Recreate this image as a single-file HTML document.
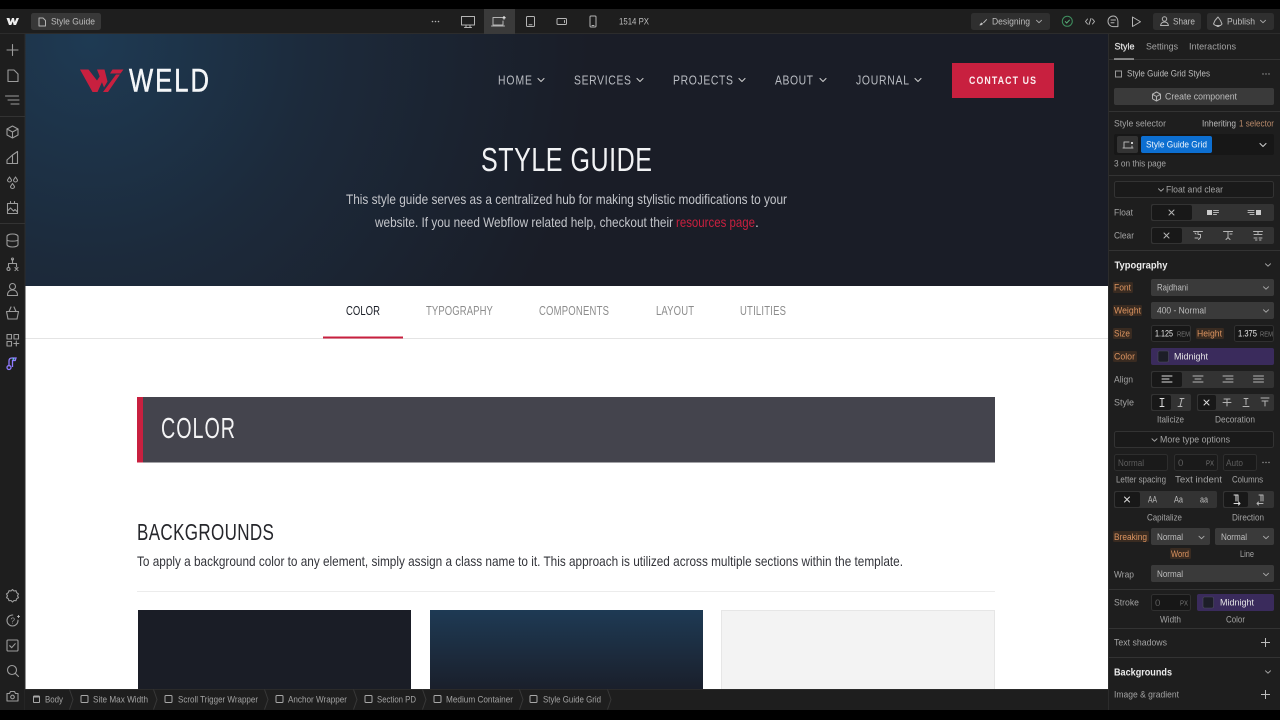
<!DOCTYPE html>
<html><head><meta charset="utf-8"><title>Style Guide</title>
<style>
html,body{margin:0;padding:0;background:#000;width:1280px;height:720px;overflow:hidden}
svg{display:block;filter:blur(.3px)}
text{font-family:"Liberation Sans",sans-serif;white-space:pre}
.u{font-size:9.6px;fill:#bdbdbd;transform:translateY(-.5px)}
.g{font-size:9.6px;fill:#a3a3a3;transform:translateY(-.5px)}
.o{font-size:9.6px;fill:#dc9460;transform:translateY(-.5px)}
.w{font-size:9.6px;fill:#e6e6e6;transform:translateY(-.5px)}
.i{fill:none;stroke:#b4b4b4;stroke-width:1;stroke-linecap:round;stroke-linejoin:round}
.r{fill:none;stroke:#9c9c9c;stroke-width:1.1;stroke-linecap:round;stroke-linejoin:round}
</style></head><body>
<svg width="1280" height="720" viewBox="0 0 1280 720" xmlns="http://www.w3.org/2000/svg">
<defs>
<radialGradient id="hero" gradientUnits="userSpaceOnUse" cx="90" cy="40" r="500">
<stop offset="0" stop-color="#1e3a53"/><stop offset=".45" stop-color="#1c2a3b"/><stop offset="1" stop-color="#1a1d27"/>
</radialGradient>
<linearGradient id="card" x1="0" y1="0" x2="0" y2="1"><stop offset="0" stop-color="#1e3a54"/><stop offset="1" stop-color="#1a1f2b"/></linearGradient>
<path id="chev" d="M-3-1.5 0 1.5 3-1.5" fill="none" stroke="#c8c8c8" stroke-width="1.1" stroke-linecap="round" stroke-linejoin="round"/>
<path id="pchev" d="M-2.5-1.2 0 1.2 2.5-1.2" fill="none" stroke="#a8a8a8" stroke-width="1" stroke-linecap="round" stroke-linejoin="round"/>
<path id="sep" d="M-1.5-10 2 0-1.5 10" fill="none" stroke="#383838" stroke-width="1"/>
<rect id="box" x="-3.5" y="-3.5" width="7" height="7" rx="1" fill="none" stroke="#a8a8a8" stroke-width="1"/>
<path id="plus" d="M-4.500 0H4.500M0-4.500V4.500" stroke="#bdbdbd" stroke-width="1" fill="none"/>
</defs>

<rect width="1280" height="720" fill="#000"/>
<!-- canvas -->
<rect x="25" y="34" width="1083" height="655" fill="#fff"/>
<rect x="25" y="34" width="1083" height="252" fill="url(#hero)"/>

<!-- logo -->
<polygon points="80,69.5 88.5,69.5 97,80.5 101,74.5 105.5,74.5 97.5,92 92.5,92" fill="#c8203f"/>
<polygon points="97,69.5 104.5,69.5 107.5,81.5 104,87.5" fill="#c8203f"/>
<polygon points="103,92 116,74.5 120,74.5 108,92" fill="#c8203f"/>
<polygon points="112.5,69.5 123.5,69.5 120.5,73.5 110,73.5" fill="#c8203f"/>
<text transform="translate(129 91.5) scale(.8 1)" font-size="32" fill="#f4f6f8" textLength="100" lengthAdjust="spacing" stroke="#f4f6f8" stroke-width=".5">WELD</text>

<!-- nav -->
<g font-size="13" fill="#b9bcc2">
<text transform="translate(498 84.5) scale(.8 1)" textLength="42.500" lengthAdjust="spacing">HOME</text>
<text transform="translate(574 84.5) scale(.8 1)" textLength="71.250" lengthAdjust="spacing">SERVICES</text>
<text transform="translate(673 84.5) scale(.8 1)" textLength="75" lengthAdjust="spacing">PROJECTS</text>
<text transform="translate(775 84.5) scale(.8 1)" textLength="47.500" lengthAdjust="spacing">ABOUT</text>
<text transform="translate(856 84.5) scale(.8 1)" textLength="66.250" lengthAdjust="spacing">JOURNAL</text>
</g>
<use href="#chev" x="541" y="80"/><use href="#chev" x="640" y="80"/><use href="#chev" x="742" y="80"/><use href="#chev" x="823" y="80"/><use href="#chev" x="918" y="80"/>
<rect x="952" y="63" width="102" height="35" fill="#c8203f"/>
<text transform="translate(969 84) scale(.8 1)" font-size="11" font-weight="bold" fill="#fbeef0" textLength="83.750" lengthAdjust="spacing">CONTACT US</text>

<!-- hero -->
<text transform="translate(481 171) scale(.76 1)" font-size="33" fill="#f2f3f5" textLength="225" lengthAdjust="spacing">STYLE GUIDE</text>
<text x="346" y="204" font-size="14" fill="#c3c5ca" textLength="441" lengthAdjust="spacingAndGlyphs">This style guide serves as a centralized hub for making stylistic modifications to your</text>
<text x="375" y="227" font-size="14" fill="#c3c5ca" textLength="298" lengthAdjust="spacingAndGlyphs">website. If you need Webflow related help, checkout their</text>
<text x="676" y="227" font-size="14" fill="#c8203f" textLength="79" lengthAdjust="spacingAndGlyphs">resources page</text>
<text x="755" y="227" font-size="14" fill="#c3c5ca">.</text>

<!-- tabs -->
<rect x="25" y="338" width="1083" height="1" fill="#e4e4e4"/>
<rect x="323" y="336.500" width="80" height="2" fill="#c8203f"/>
<g font-size="12.500" fill="#8c8c8c">
<text transform="translate(346 315) scale(.76 1)" fill="#1a1d26" textLength="44.700" lengthAdjust="spacing">COLOR</text>
<text transform="translate(426 315) scale(.76 1)" textLength="88" lengthAdjust="spacing">TYPOGRAPHY</text>
<text transform="translate(539 315) scale(.76 1)" textLength="92" lengthAdjust="spacing">COMPONENTS</text>
<text transform="translate(656 315) scale(.76 1)" textLength="50" lengthAdjust="spacing">LAYOUT</text>
<text transform="translate(740 315) scale(.76 1)" textLength="60.500" lengthAdjust="spacing">UTILITIES</text>
</g>

<!-- band -->
<rect x="137" y="397" width="858" height="65.500" fill="#44444d"/>
<rect x="137" y="397" width="6" height="65.500" fill="#c8203f"/>
<text transform="translate(161 438) scale(.68 1)" font-size="29" fill="#f4f4f5" textLength="108.800" lengthAdjust="spacing">COLOR</text>
<text transform="translate(137 540) scale(.74 1)" font-size="23" fill="#25262b" textLength="185" lengthAdjust="spacing">BACKGROUNDS</text>
<text x="137" y="566" font-size="14" fill="#33343a" textLength="766" lengthAdjust="spacingAndGlyphs">To apply a background color to any element, simply assign a class name to it. This approach is utilized across multiple sections within the template.</text>
<rect x="137" y="591" width="858" height="1" fill="#ececec"/>
<rect x="138" y="610" width="273" height="79" fill="#1a1d26"/>
<rect x="430" y="610" width="273" height="79" fill="url(#card)"/>
<rect x="721.500" y="610.500" width="273" height="79" fill="#f3f3f3" stroke="#e6e6e6"/>

<!-- top bar -->
<rect x="0" y="9" width="1280" height="25" fill="#1e1e1e"/>
<rect x="0" y="33" width="1280" height="1" fill="#2c2c2c"/>
<path d="M6.500 18h3l1 4 1.500-4h2l.8 4 1.700-4H19l-3 7h-2.400l-.8-3.500-1.500 3.500H9z" fill="#eee"/>
<rect x="31" y="13" width="70" height="17" rx="2.500" fill="#383838"/>
<path class="i" d="M39 18h4l2.500 2.500V26H39z"/>
<text x="51" y="25" class="u" textLength="44" lengthAdjust="spacingAndGlyphs">Style Guide</text>
<g fill="#b4b4b4"><circle cx="432.500" cy="21.500" r=".8"/><circle cx="435.500" cy="21.500" r=".8"/><circle cx="438.500" cy="21.500" r=".8"/></g>
<rect x="484" y="9" width="31" height="25" fill="#3a3a3a"/>
<path class="i" d="M461.500 16.500h13v8.500h-13zM464.500 27.500h7M466 25v2.500M470 25v2.500"/>
<path class="i" d="M493 17.500h9M493 17.500v7.500h10v-4M491.500 26h13"/>
<path d="M504 16v3.500M502.300 17.750h3.400" stroke="#eee" stroke-width="1.100"/>
<rect x="526.500" y="16.500" width="8" height="10" rx="1" class="i"/><path class="i" d="M529 24.800h3"/>
<rect x="557" y="18.500" width="9.500" height="6" rx="1" class="i"/><path class="i" d="M564.500 20.500v2"/>
<rect x="590" y="16" width="6" height="11" rx="1" class="i"/><path class="i" d="M592 25.500h2"/>
<text x="619" y="25" class="u" textLength="30" lengthAdjust="spacingAndGlyphs">1514 PX</text>

<rect x="971" y="13" width="79" height="17" rx="2.500" fill="#2f2f2f"/>
<path d="M979.500 25.500l2.500-.5 1-1.500-1.500-1-1.500 1.500zM983 22.500l3.500-3.500.6.600-3.300 3.600z" fill="#bdbdbd"/>
<text x="992" y="25" class="u" textLength="38" lengthAdjust="spacingAndGlyphs">Designing</text>
<use href="#pchev" x="1039" y="21.500"/>
<circle cx="1067.300" cy="21.300" r="5" fill="none" stroke="#3f8f5f" stroke-width="1"/>
<path d="M1065 21.300l1.700 1.700 3-3.200" fill="none" stroke="#5cb27c" stroke-width="1"/>
<path class="i" d="M1087.500 19l-2 2.500 2 2.500M1092.500 19l2 2.500-2 2.500M1091 18.500l-2 6"/>
<path class="i" d="M1113.300 16c-3 0-5.300 2.300-5.300 5.300 0 3 2.300 5.300 5.300 5.300h4.600v-5.300c0-3-2-5.300-4.600-5.300zM1111 20h4.500M1111 22.800h3"/>
<path class="i" d="M1132.500 17v9.500l8-4.750z"/>
<rect x="1153" y="13" width="48" height="17" rx="2.500" fill="#2f2f2f"/>
<circle cx="1164.500" cy="19" r="2.200" class="i"/><path class="i" d="M1160.500 25.500c.5-2.500 2-3.500 4-3.500s3.500 1 4 3.500z"/>
<text x="1173" y="25" class="u" textLength="22" lengthAdjust="spacingAndGlyphs">Share</text>
<rect x="1207" y="13" width="67" height="17" rx="2.500" fill="#2f2f2f"/>
<path class="i" d="M1218 17l2.500 3.500 1.500 3.500-1.500 1.500h-5L1213.500 24l1.500-3.500zM1217 25.500v1h2v-1"/>
<text x="1227" y="25" class="u" textLength="28" lengthAdjust="spacingAndGlyphs">Publish</text>
<use href="#pchev" x="1263" y="21.500"/>

<!-- left rail -->
<rect x="0" y="34" width="25" height="676" fill="#1e1e1e"/>
<rect x="24.500" y="34" width="1" height="676" fill="#2c2c2c"/>
<rect x="0" y="116" width="25" height="1" fill="#333"/>
<rect x="0" y="223" width="25" height="1" fill="#333"/>
<path class="r" d="M7 50h11M12.500 44.500v11"/>
<path class="r" d="M8 70h6l4 4v7.500H8z"/>
<path class="r" d="M5.500 96h13M8 100h11M11 104h8"/>
<path class="r" d="M12.500 126l5.500 3v6l-5.500 3-5.500-3v-6zM7 129l5.500 3 5.500-3M12.500 132v6"/>
<path class="r" d="M17.500 151.500v12h-5v-8.500zM12.500 155l-5.500 5v3.500h5.500"/>
<path class="r" d="M9.500 177l2 3a2 2 0 0 1-4 0zM15.500 177l2 3a2 2 0 0 1-4 0zM12.500 183.500l2 3a2 2 0 0 1-4 0z"/>
<path class="r" d="M7.500 203.500h10v10h-10zM7.500 211l3-3 3 3 1.500-1.500 2.500 2.500M10.500 201.500v2M14.500 201.500v2"/>
<path class="r" d="M12.500 234c3 0 5.500 1 5.500 2.500v8c0 1.500-2.500 2.500-5.500 2.500s-5.500-1-5.500-2.500v-8c0-1.500 2.500-2.500 5.500-2.500zM7 240c1 1.500 10 1.500 11 0"/>
<path class="r" d="M12.500 259.500v4M8.500 267v-3.500h8v3.500"/><circle cx="8.500" cy="269" r="1.500" class="r"/><path class="r" d="M15 267.500l3 3M18 267.500l-3 3"/><circle cx="12.500" cy="259" r="1" class="r"/>
<circle cx="12.500" cy="286.500" r="3" class="r"/><path class="r" d="M7.500 295.500c0-3.500 2-5.500 5-5.500s5 2 5 5.500z"/>
<path class="r" d="M6.500 311.500h12l-1.500 7.500h-9zM9 311.500l2-4.500M16 311.500l-2-4.500"/>
<path class="r" d="M7 334.500h4.500v4.500H7zM14 334.500h4.500v4.500H14zM7 341.500h4.500v4.500H7zM16.300 341v5M13.800 343.500h5"/>
<path d="M9 366.500v-5.500c0-2 1-3 3-3h4l-.8 2.500h-2.700v6.500" fill="none" stroke="#8f7bff" stroke-width="1.300"/>
<circle cx="9" cy="367.500" r="2" fill="none" stroke="#8f7bff" stroke-width="1.300"/>
<path d="M12.500 358l1.500 1-1.500 1" fill="none" stroke="#5fd0e8" stroke-width=".8"/>
<path class="r" d="M12.500 590l1.500 1.500 2-.3.700 2 1.800 1.300-1 1.800 1 1.800-1.800 1.100-.7 2-2-.2-1.500 1.500-1.500-1.500-2 .2-.7-2-1.800-1.100 1-1.800-1-1.800 1.800-1.300.7-2 2 .3z" transform="translate(0 -.5)"/>
<circle cx="12.500" cy="620.500" r="5.500" class="r" stroke-dasharray="26 8"/>
<text x="10.500" y="623.500" font-size="8" fill="#9c9c9c">?</text>
<path d="M18.500 615v3M17 616.500h3" stroke="#ccc" stroke-width=".8"/>
<rect x="7" y="640" width="11" height="11" rx="1" class="r"/><path class="r" d="M9.700 645.700l2 2 3.500-4"/>
<circle cx="12" cy="670" r="4.500" class="r"/><path class="r" d="M15.500 673.500l3 3"/>
<path class="r" d="M7 693.500h2.500l1-2h4l1 2H18v7.500H7z"/><circle cx="12.500" cy="697" r="1.800" class="r"/>

<!-- bottom bar -->
<rect x="25" y="689" width="1083" height="21" fill="#1e1e1e"/>
<rect x="25" y="689" width="1083" height="1" fill="#2a2a2a"/>
<rect x="33.500" y="696" width="6" height="6.500" rx=".8" fill="none" stroke="#a8a8a8"/><rect x="33.500" y="696" width="6" height="1.500" fill="#a8a8a8"/>
<g font-size="9.400" fill="#a3a3a3">
<text x="45" y="702.500" textLength="18" lengthAdjust="spacingAndGlyphs">Body</text>
<text x="93" y="702.500" textLength="55" lengthAdjust="spacingAndGlyphs">Site Max Width</text>
<text x="178" y="702.500" textLength="80" lengthAdjust="spacingAndGlyphs">Scroll Trigger Wrapper</text>
<text x="288" y="702.500" textLength="59" lengthAdjust="spacingAndGlyphs">Anchor Wrapper</text>
<text x="377" y="702.500" textLength="39" lengthAdjust="spacingAndGlyphs">Section PD</text>
<text x="446" y="702.500" textLength="67" lengthAdjust="spacingAndGlyphs">Medium Container</text>
<text x="543" y="702.500" textLength="58" lengthAdjust="spacingAndGlyphs">Style Guide Grid</text>
</g>
<use href="#box" x="84.500" y="699"/><use href="#box" x="168.500" y="699"/><use href="#box" x="279.500" y="699"/><use href="#box" x="368.500" y="699"/><use href="#box" x="437.500" y="699"/><use href="#box" x="533.500" y="699"/>
<use href="#sep" x="71" y="699.500"/><use href="#sep" x="155" y="699.500"/><use href="#sep" x="266" y="699.500"/><use href="#sep" x="355" y="699.500"/><use href="#sep" x="424" y="699.500"/><use href="#sep" x="521" y="699.500"/><use href="#sep" x="609" y="699.500"/>

<!-- right panel -->
<rect x="1108" y="34" width="172" height="676" fill="#1e1e1e"/>
<rect x="1108" y="34" width="1" height="676" fill="#2c2c2c"/>
<g fill="#333">
<rect x="1109" y="59" width="171" height="1"/><rect x="1109" y="111" width="171" height="1"/><rect x="1109" y="175" width="171" height="1"/>
<rect x="1109" y="250" width="171" height="1"/><rect x="1109" y="589" width="171" height="1"/><rect x="1109" y="628" width="171" height="1"/><rect x="1109" y="657" width="171" height="1"/>
</g>
<rect x="1114" y="58.500" width="20" height="1" fill="#ddd"/>
<text x="1114.500" y="50" class="w" textLength="20" lengthAdjust="spacingAndGlyphs" stroke="#e6e6e6" stroke-width=".2">Style</text>
<text x="1146" y="50" class="g" textLength="32" lengthAdjust="spacingAndGlyphs">Settings</text>
<text x="1189" y="50" class="g" textLength="47" lengthAdjust="spacingAndGlyphs">Interactions</text>
<rect x="1115.500" y="71" width="6" height="6" fill="none" stroke="#999"/>
<text x="1127" y="77" class="u" textLength="83" lengthAdjust="spacingAndGlyphs">Style Guide Grid Styles</text>
<g fill="#999"><circle cx="1263" cy="74" r=".7"/><circle cx="1266" cy="74" r=".7"/><circle cx="1269" cy="74" r=".7"/></g>

<rect x="1114" y="88" width="160" height="17" rx="2" fill="#3a3a3a"/>
<path class="i" d="M1156.500 92l4 2.200v4.600l-4 2.200-4-2.200v-4.600zM1152.500 94.200l4 2.300 4-2.300M1156.500 96.500v4.500"/>
<text x="1165" y="100" class="u" textLength="72" lengthAdjust="spacingAndGlyphs">Create component</text>

<text x="1114" y="127" class="g" textLength="52" lengthAdjust="spacingAndGlyphs">Style selector</text>
<text x="1202" y="127" class="u" textLength="34" lengthAdjust="spacingAndGlyphs">Inheriting</text>
<text x="1239" y="127" font-size="9.600" fill="#b98a6a" textLength="35" lengthAdjust="spacingAndGlyphs" class="o" style="fill:#b98a6a">1 selector</text>
<rect x="1114" y="134" width="160" height="21" rx="2" fill="#171717"/>
<rect x="1117" y="136" width="21" height="17" rx="2" fill="#333"/>
<path class="i" d="M1124 142h5M1124 142v6h8v-2M1123 148h10"/><rect x="1131" y="142" width="2" height="2" fill="#ccc"/>
<rect x="1141" y="136" width="71" height="17" rx="2" fill="#0d6fd1"/>
<text x="1146" y="147.500" font-size="9.600" fill="#f2f7fc" textLength="61" lengthAdjust="spacingAndGlyphs">Style Guide Grid</text>
<use href="#chev" x="1263" y="145"/>
<text x="1114" y="167" class="g" textLength="52" lengthAdjust="spacingAndGlyphs">3 on this page</text>

<rect x="1114.500" y="181.500" width="159" height="16" rx="2" fill="#1a1a1a" stroke="#333"/>
<use href="#pchev" x="1161" y="190"/>
<text x="1166" y="193" class="g" textLength="57" lengthAdjust="spacingAndGlyphs">Float and clear</text>

<text x="1114" y="216" class="g" textLength="19" lengthAdjust="spacingAndGlyphs">Float</text>
<rect x="1151" y="204" width="123" height="17" rx="2" fill="#333"/>
<rect x="1152" y="205" width="40" height="15" rx="2" fill="#181818"/>
<path class="i" d="M1169 210l5 5M1174 210l-5 5"/>
<rect x="1207" y="210" width="5" height="5" fill="#ccc"/><path class="i" d="M1213.500 210.500h5M1213.500 212.500h5M1213.500 214.500h3"/>
<rect x="1256" y="210" width="5" height="5" fill="#ccc"/><path class="i" d="M1248 210.500h6M1248 212.500h6M1250 214.500h4"/>

<text x="1114" y="239" class="g" textLength="20" lengthAdjust="spacingAndGlyphs">Clear</text>
<rect x="1151" y="227" width="123" height="17" rx="2" fill="#333"/>
<rect x="1152" y="228" width="30" height="15" rx="2" fill="#181818"/>
<path class="i" d="M1164 233l5 5M1169 233l-5 5"/>
<path class="i" d="M1193.500 231.500h9M1198 231.500v3h2.500v3l-2 2M1195 233l1 1M1195 238h3"/>
<path class="i" d="M1223.500 231.500h9M1228 231.500v6l2 2M1228 237.500l-2 2M1230 234h2"/>
<path class="i" d="M1253.500 231.500h9M1258 231.500v2M1254 234.500h8M1254 238h3M1259 238h3M1255.500 240h1.500M1259.500 240h1.500"/>

<text x="1114.500" y="268.500" font-size="10.500" font-weight="bold" fill="#ececec" textLength="53" lengthAdjust="spacingAndGlyphs">Typography</text>
<use href="#pchev" x="1268" y="265"/>

<!-- orange highlight labels -->
<g fill="#c86e32" fill-opacity=".16">
<rect x="1113" y="282" width="20" height="11" rx="1.500"/>
<rect x="1113" y="305" width="29" height="11" rx="1.500"/>
<rect x="1113" y="328" width="19" height="11" rx="1.500"/>
<rect x="1196" y="328" width="28" height="11" rx="1.500"/>
<rect x="1113" y="351" width="24" height="11" rx="1.500"/>
<rect x="1113" y="531" width="36" height="11" rx="1.500"/>
<rect x="1170" y="548" width="21" height="11" rx="1.500"/>
</g>
<text x="1114" y="291" class="o" textLength="17" lengthAdjust="spacingAndGlyphs">Font</text>
<text x="1114" y="314" class="o" textLength="27" lengthAdjust="spacingAndGlyphs">Weight</text>
<text x="1114" y="337" class="o" textLength="16" lengthAdjust="spacingAndGlyphs">Size</text>
<text x="1197" y="337" class="o" textLength="25" lengthAdjust="spacingAndGlyphs">Height</text>
<text x="1114" y="360" class="o" textLength="21" lengthAdjust="spacingAndGlyphs">Color</text>

<rect x="1151" y="279" width="123" height="17" rx="2" fill="#3a3a3a"/>
<text x="1157" y="291" class="u" textLength="31" lengthAdjust="spacingAndGlyphs">Rajdhani</text>
<use href="#pchev" x="1266" y="288"/>
<rect x="1151" y="302" width="123" height="17" rx="2" fill="#3a3a3a"/>
<text x="1157" y="314" class="u" textLength="49" lengthAdjust="spacingAndGlyphs">400 - Normal</text>
<use href="#pchev" x="1266" y="311"/>
<rect x="1151.500" y="325.500" width="39" height="16" rx="2" fill="#171717" stroke="#303030"/>
<text x="1155" y="337" class="w" textLength="18" lengthAdjust="spacingAndGlyphs">1.125</text>
<text x="1177" y="336.500" font-size="7" fill="#777" textLength="13" lengthAdjust="spacingAndGlyphs">REM</text>
<rect x="1234.500" y="325.500" width="39" height="16" rx="2" fill="#171717" stroke="#303030"/>
<text x="1238" y="337" class="w" textLength="19" lengthAdjust="spacingAndGlyphs">1.375</text>
<text x="1260" y="336.500" font-size="7" fill="#777" textLength="13" lengthAdjust="spacingAndGlyphs">REM</text>
<rect x="1151" y="348" width="123" height="17" rx="2" fill="#3a2b5c"/>
<rect x="1158" y="351" width="10.500" height="11" rx="1.500" fill="#1d1e28" stroke="#4c4c5c" stroke-width=".6"/>
<text x="1174" y="360" class="w" textLength="34" lengthAdjust="spacingAndGlyphs">Midnight</text>

<text x="1114" y="383" class="g" textLength="19" lengthAdjust="spacingAndGlyphs">Align</text>
<rect x="1151" y="371" width="123" height="17" rx="2" fill="#333"/>
<rect x="1152" y="372" width="30" height="15" rx="2" fill="#181818"/>
<path class="i" d="M1162 376h10M1162 379h7M1162 382h10" style="stroke:#ddd"/>
<path class="i" d="M1193 376h10M1195 379h6M1193 382h10"/>
<path class="i" d="M1223 376h10M1226 379h7M1223 382h10"/>
<path class="i" d="M1253.500 376h10M1253.500 379h10M1253.500 382h10"/>

<text x="1114" y="406" class="g" textLength="20" lengthAdjust="spacingAndGlyphs">Style</text>
<rect x="1151" y="394" width="40" height="17" rx="2" fill="#333"/>
<rect x="1152" y="395" width="19" height="15" rx="2" fill="#181818"/>
<path class="i" d="M1162 398.500v8M1160 398.500h4M1160 406.500h4" style="stroke:#ddd"/>
<path class="i" d="M1182 398.500l-2 8M1180 398.500h4M1178 406.500h4"/>
<rect x="1197" y="394" width="77" height="17" rx="2" fill="#333"/>
<rect x="1198" y="395" width="18" height="15" rx="2" fill="#181818"/>
<path class="i" d="M1204 400l5 5M1209 400l-5 5" style="stroke:#ddd"/>
<path class="i" d="M1223 402.500h8M1224 399h6M1227 399v7"/>
<path class="i" d="M1243 406.500h6M1244 398.500h4M1246 398.500v6"/>
<path class="i" d="M1261 398h8M1262 401h6M1265 401v5"/>
<text x="1157" y="423" class="g" textLength="27" lengthAdjust="spacingAndGlyphs">Italicize</text>
<text x="1215" y="423" class="g" textLength="40" lengthAdjust="spacingAndGlyphs">Decoration</text>

<rect x="1114.500" y="431.500" width="159" height="16" rx="2" fill="#1a1a1a" stroke="#333"/>
<use href="#pchev" x="1154.500" y="440"/>
<text x="1160" y="443" class="g" textLength="70" lengthAdjust="spacingAndGlyphs">More type options</text>

<rect x="1114.500" y="454.500" width="53" height="16" rx="2" fill="#1a1a1a" stroke="#2e2e2e"/>
<text x="1118" y="466" font-size="9.600" fill="#5d5d5d" textLength="26" lengthAdjust="spacingAndGlyphs">Normal</text>
<rect x="1174.500" y="454.500" width="43" height="16" rx="2" fill="#1a1a1a" stroke="#2e2e2e"/>
<text x="1178" y="466" font-size="9.600" fill="#5d5d5d">0</text>
<text x="1206" y="465.500" font-size="7" fill="#777" textLength="8" lengthAdjust="spacingAndGlyphs">PX</text>
<rect x="1223.500" y="454.500" width="33" height="16" rx="2" fill="#1a1a1a" stroke="#2e2e2e"/>
<text x="1226" y="466" font-size="9.600" fill="#5d5d5d" textLength="17" lengthAdjust="spacingAndGlyphs">Auto</text>
<g fill="#999"><circle cx="1263" cy="462.500" r=".7"/><circle cx="1266" cy="462.500" r=".7"/><circle cx="1269" cy="462.500" r=".7"/></g>
<text x="1116" y="483" class="g" textLength="50" lengthAdjust="spacingAndGlyphs">Letter spacing</text>
<text x="1175" y="483" class="g" textLength="47" lengthAdjust="spacingAndGlyphs">Text indent</text>
<text x="1232" y="483" class="g" textLength="31" lengthAdjust="spacingAndGlyphs">Columns</text>

<rect x="1114" y="491" width="103" height="17" rx="2" fill="#333"/>
<rect x="1115" y="492" width="25" height="15" rx="2" fill="#181818"/>
<path class="i" d="M1124.500 497l5 5M1129.500 497l-5 5" style="stroke:#ddd"/>
<text x="1148" y="503" class="u" textLength="9" lengthAdjust="spacingAndGlyphs">AA</text>
<text x="1174" y="503" class="u" textLength="9" lengthAdjust="spacingAndGlyphs">Aa</text>
<text x="1200" y="503" class="u" textLength="8" lengthAdjust="spacingAndGlyphs">aa</text>
<rect x="1223" y="491" width="51" height="17" rx="2" fill="#333"/>
<rect x="1224" y="492" width="24" height="15" rx="2" fill="#181818"/>
<path class="i" d="M1234 495h4M1236 495v6M1238 495v6M1234 503.500h6M1238.500 502l1.500 1.500-1.500 1.500" style="stroke:#ddd"/>
<path class="i" d="M1259 495h4M1261 495v6M1263 495v6M1257 503.500h6M1258.500 502l-1.500 1.500 1.500 1.500"/>
<text x="1147" y="521" class="g" textLength="35" lengthAdjust="spacingAndGlyphs">Capitalize</text>
<text x="1232" y="521" class="g" textLength="32" lengthAdjust="spacingAndGlyphs">Direction</text>

<text x="1114" y="540.500" class="o" textLength="33" lengthAdjust="spacingAndGlyphs">Breaking</text>
<rect x="1151" y="528" width="59" height="17" rx="2" fill="#3a3a3a"/>
<text x="1157" y="540.500" class="u" textLength="26" lengthAdjust="spacingAndGlyphs">Normal</text>
<use href="#pchev" x="1201.500" y="537.500"/>
<rect x="1215" y="528" width="59" height="17" rx="2" fill="#3a3a3a"/>
<text x="1221" y="540.500" class="u" textLength="26" lengthAdjust="spacingAndGlyphs">Normal</text>
<use href="#pchev" x="1266" y="537.500"/>
<text x="1171" y="557.500" class="o" textLength="18" lengthAdjust="spacingAndGlyphs">Word</text>
<text x="1240" y="557.500" class="g" textLength="14" lengthAdjust="spacingAndGlyphs">Line</text>

<text x="1114" y="578" class="g" textLength="20" lengthAdjust="spacingAndGlyphs">Wrap</text>
<rect x="1151" y="565" width="123" height="17" rx="2" fill="#3a3a3a"/>
<text x="1157" y="577.500" class="u" textLength="26" lengthAdjust="spacingAndGlyphs">Normal</text>
<use href="#pchev" x="1266" y="574.500"/>

<text x="1114" y="606" class="g" textLength="25" lengthAdjust="spacingAndGlyphs">Stroke</text>
<rect x="1151.500" y="594.500" width="39" height="16" rx="2" fill="#171717" stroke="#303030"/>
<text x="1155" y="606" font-size="9.600" fill="#5d5d5d">0</text>
<text x="1180" y="605.500" font-size="7" fill="#777" textLength="8" lengthAdjust="spacingAndGlyphs">PX</text>
<rect x="1197" y="594" width="77" height="17" rx="2" fill="#3a2b5c"/>
<rect x="1203" y="597" width="10.500" height="11" rx="1.500" fill="#1d1e28" stroke="#4c4c5c" stroke-width=".6"/>
<text x="1220" y="606" class="w" textLength="34" lengthAdjust="spacingAndGlyphs">Midnight</text>
<text x="1160" y="623" class="g" textLength="21" lengthAdjust="spacingAndGlyphs">Width</text>
<text x="1226" y="623" class="g" textLength="19" lengthAdjust="spacingAndGlyphs">Color</text>

<text x="1114" y="646" class="g" textLength="53" lengthAdjust="spacingAndGlyphs">Text shadows</text>
<use href="#plus" x="1265.500" y="642.500"/>
<text x="1114" y="675.500" font-size="10.500" font-weight="bold" fill="#ececec" textLength="58" lengthAdjust="spacingAndGlyphs">Backgrounds</text>
<use href="#pchev" x="1268" y="672"/>
<text x="1114" y="698" class="g" textLength="65" lengthAdjust="spacingAndGlyphs">Image &amp; gradient</text>
<use href="#plus" x="1265.500" y="694.500"/>
</svg>
</body></html>
